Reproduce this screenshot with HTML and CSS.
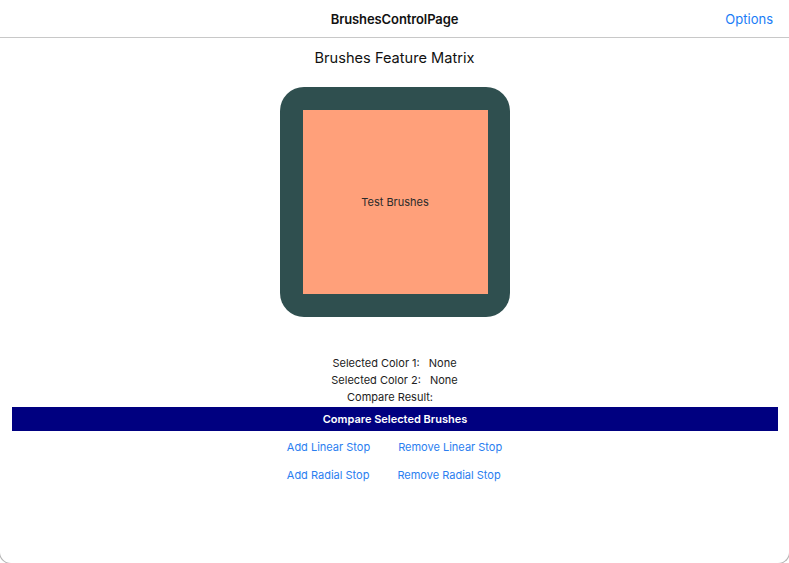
FILE: index.html
```html
<!DOCTYPE html>
<html>
<head>
<meta charset="utf-8">
<link rel="stylesheet" href="styles.css">
</head>
<body>
<div class="window">
  <header class="navbar">
    <div class="nav-side"></div>
    <div class="nav-title">BrushesControlPage</div>
    <div class="nav-side nav-right"><a class="nav-action">Options</a></div>
  </header>
  <main class="content">
    <h1 class="page-title">Brushes Feature Matrix</h1>
    <div class="frame">
      <div class="swatch">Test Brushes</div>
    </div>
    <div class="info">
      <div class="info-row"><span>Selected Color 1:</span><span>None</span></div>
      <div class="info-row"><span>Selected Color 2:</span><span>None</span></div>
      <div class="info-row"><span>Compare Result:</span><span></span></div>
    </div>
    <button class="compare-btn">Compare Selected Brushes</button>
    <div class="stops">
      <div class="stop-row"><a class="link">Add Linear Stop</a><a class="link">Remove Linear Stop</a></div>
      <div class="stop-row"><a class="link">Add Radial Stop</a><a class="link">Remove Radial Stop</a></div>
    </div>
  </main>
</div>
</body>
</html>
```
FILE: styles.css
```css
html, body {
  margin: 0;
  padding: 0;
  background: #ffffff;
  overflow: hidden;
}
body {
  font-family: Inter, "Liberation Sans", sans-serif;
  color: #1c1c1e;
}
.window {
  box-sizing: border-box;
  height: 564px;
  margin: 0 -1px;
  border: 1px solid #b5b5b5;
  border-top: none;
  border-radius: 0 0 12px 12px;
  background: #fff;
}
.navbar {
  height: 37px;
  border-bottom: 1px solid #c8c8c8;
  display: grid;
  grid-template-columns: 1fr auto 1fr;
  align-items: center;
}
.nav-title {
  font-size: 13px;
  font-weight: 600;
  color: #111;
  letter-spacing: -0.1px;
}
.nav-right {
  display: flex;
  justify-content: flex-end;
  padding-right: 16px;
}
.nav-action {
  color: #1a7cf6;
  font-size: 13px;
}
.content {
  display: flex;
  flex-direction: column;
  align-items: center;
}
.page-title {
  margin: 11px 0 0;
  font-size: 14.6px;
  font-weight: 400;
  line-height: 19px;
  color: #111;
}
.frame {
  margin-top: 19px;
  width: 230px;
  height: 230px;
  box-sizing: border-box;
  padding: 23px 22px 23px 23px;
  background: #2f4f4f;
  border-radius: 24px;
}
.swatch {
  width: 100%;
  height: 100%;
  background: #ffa07a;
  display: flex;
  align-items: center;
  justify-content: center;
  font-size: 11px;
  color: #2b2b2b;
}
.info {
  margin-top: 38px;
  display: flex;
  flex-direction: column;
  align-items: center;
}
.info-row {
  display: flex;
  gap: 9px;
  font-size: 11px;
  line-height: 17px;
  color: #222;
}
.compare-btn {
  align-self: stretch;
  margin: 1px 11px 0 12px;
  height: 24px;
  background: #000080;
  color: #fff;
  border: none;
  font-family: inherit;
  font-size: 11px;
  font-weight: 600;
  padding: 0;
}
.stops {
  margin-top: 6px;
  display: flex;
  flex-direction: column;
  gap: 8px;
}
.stop-row {
  display: flex;
  gap: 28px;
  height: 20px;
  align-items: center;
}
.link {
  color: #2a7ef0;
  font-size: 11px;
}
```
